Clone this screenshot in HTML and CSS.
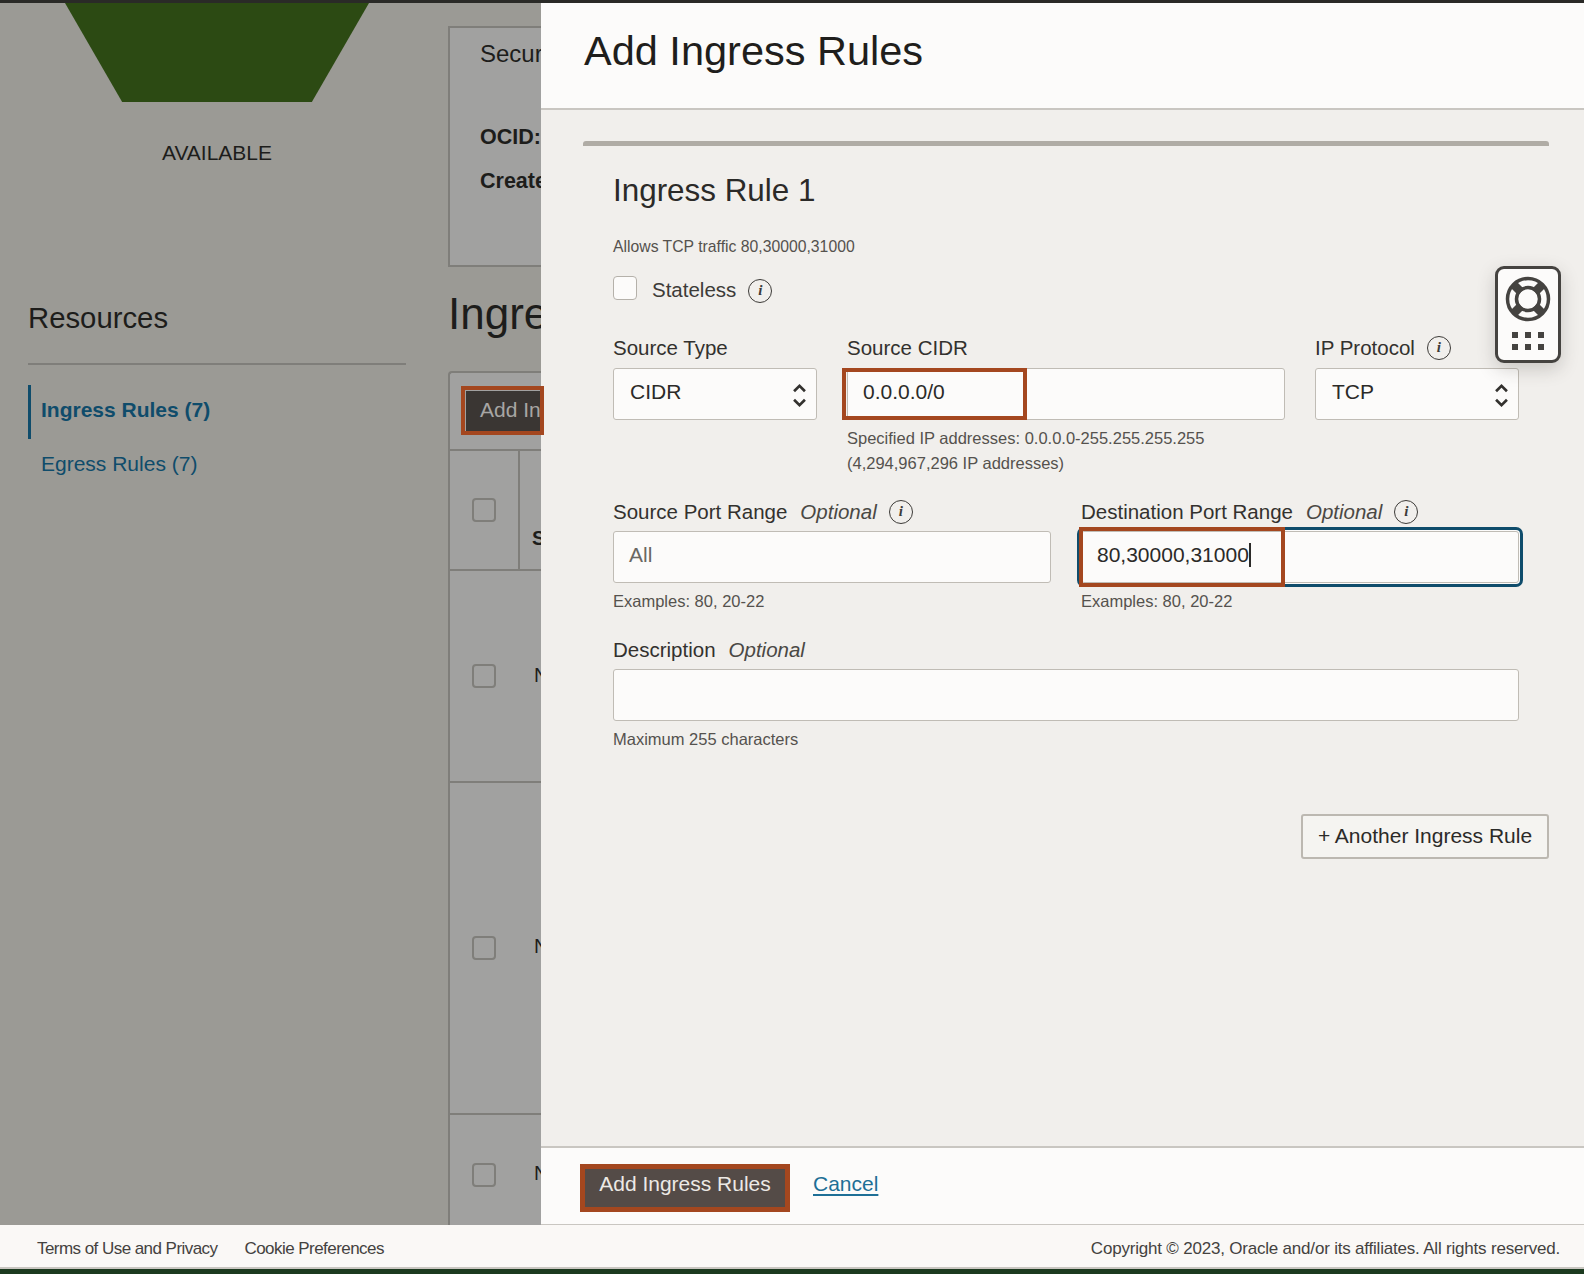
FILE: index.html
```html
<!DOCTYPE HTML>
<html>
<head>
<meta charset="utf-8" />
<title>Add Ingress Rules</title>
<link rel="stylesheet" href="styles.css">
</head>
<body>
<div class="topbar"></div>
<div class="main">
	<div class="back">
		<div class="side">
			<div class="shape"></div>
			<div class="state">AVAILABLE</div>
			<h2 class="res_title">Resources</h2>
			<ul class="res_nav">
				<li class="on"><a>Ingress Rules (7)</a></li>
				<li><a>Egress Rules (7)</a></li>
			</ul>
		</div>
		<div class="content">
			<div class="info_card">
				<div class="info_name">Security</div>
				<div class="info_line">OCID:</div>
				<div class="info_line">Created:</div>
			</div>
			<h2 class="list_title">Ingress</h2>
			<div class="table">
				<div class="toolbar"><span class="dark_btn">Add Ingress</span></div>
				<div class="t_head"><div class="t_check"><i class="box"></i></div><div class="t_cell"><b>St</b></div></div>
				<div class="t_row r1"><div class="t_check"><i class="box"></i></div><div class="t_name">No</div></div>
				<div class="t_row r2"><div class="t_check"><i class="box"></i></div><div class="t_name">No</div></div>
				<div class="t_row r3"><div class="t_check"><i class="box"></i></div><div class="t_name">No</div></div>
			</div>
		</div>
	</div>

	<div class="panel">
		<div class="p_head"><h1>Add Ingress Rules</h1></div>
		<div class="p_body">
			<div class="rule_bar"></div>
			<div class="rule">
				<h3>Ingress Rule 1</h3>
				<p class="hint allows">Allows TCP traffic 80,30000,31000</p>
				<div class="stateless"><i class="check"></i><span>Stateless</span><i class="tip">i</i></div>

				<div class="row r_source">
					<div class="field f_type">
						<label>Source Type</label>
						<div class="input select">CIDR<svg class="updown" viewBox="0 0 14 24"><path d="M2.5 8.5 7 4l4.500 4.500M2.500 15.500 7 20l4.500-4.500"/></svg></div>
					</div>
					<div class="field f_cidr">
						<label>Source CIDR</label>
						<div class="input">0.0.0.0/0<span class="mark m_cidr"></span></div>
						<p class="hint">Specified IP addresses: 0.0.0.0-255.255.255.255<br>(4,294,967,296 IP addresses)</p>
					</div>
					<div class="field f_proto">
						<label>IP Protocol<i class="tip">i</i></label>
						<div class="input select">TCP<svg class="updown" viewBox="0 0 14 24"><path d="M2.5 8.5 7 4l4.500 4.500M2.500 15.500 7 20l4.500-4.500"/></svg></div>
					</div>
				</div>

				<div class="row r_ports">
					<div class="field half">
						<label>Source Port Range<em>Optional</em><i class="tip">i</i></label>
						<div class="input empty">All</div>
						<p class="hint">Examples: 80, 20-22</p>
					</div>
					<div class="field half">
						<label>Destination Port Range<em>Optional</em><i class="tip">i</i></label>
						<div class="input focus">80,30000,31000<span class="caret"></span><span class="mark m_dest"></span></div>
						<p class="hint">Examples: 80, 20-22</p>
					</div>
				</div>

				<div class="field f_desc">
					<label>Description<em>Optional</em></label>
					<div class="input"></div>
					<p class="hint">Maximum 255 characters</p>
				</div>
			</div>
			<div class="more"><span class="more_btn">+ Another Ingress Rule</span></div>
		</div>
		<div class="p_foot">
			<span class="add_btn">Add Ingress Rules</span>
			<a class="cancel">Cancel</a>
		</div>
	</div>

	<span class="mark m_back"></span>

	<div class="helper">
		<svg class="buoy" viewBox="0 0 48 48">
			<circle cx="24" cy="24" r="20.500" fill="none" stroke="#454340" stroke-width="3.500"/>
			<circle cx="24" cy="24" r="11.500" fill="none" stroke="#454340" stroke-width="3.500"/>
			<path d="M10 10 17 17M38 10 31 17M10 38 17 31M38 38 31 31" stroke="#454340" stroke-width="8.500"/>
		</svg>
		<div class="dots"><i></i><i></i><i></i><i></i><i></i><i></i></div>
	</div>
</div>
<div class="footer">
	<div class="f_links"><a>Terms of Use and Privacy</a><a>Cookie Preferences</a></div>
	<div class="f_copy">Copyright © 2023, Oracle and/or its affiliates. All rights reserved.</div>
</div>
<div class="strip"></div>
</body>
</html>
```
FILE: styles.css
```css
*{ padding:0; margin:0; border:0; list-style-type:none; box-sizing:border-box;}
html,body{ height:1274px; overflow:hidden;}
body{ display:flex; flex-direction:column; font-family:"Liberation Sans",Arial,sans-serif; color:#2b2a28; background:#9b9a95;}
i,em{ display:inline-block;}

.topbar{ height:3px; background:#2a2a27; flex:none;}
.main{ height:1222px; flex:none; display:flex; position:relative;}

/* page behind the panel, dimmed */
.back{ width:541px; flex:none; display:flex; background:#9b9a95; overflow:hidden; color:#1d1d1b;}
.side{ width:448px; flex:none; padding-left:28px;}
.shape{ width:304px; height:99px; margin-left:37px; background:#2c4a13; clip-path:polygon(0 0,100% 0,81.200% 100%,18.800% 100%);}
.state{ width:378px; margin-top:37px; text-align:center; font-size:21px; line-height:28px;}
.res_title{ font-weight:normal; font-size:29.300px; line-height:38px; margin-top:132px; width:378px; height:66px; border-bottom:2px solid #7f7e7a;}
.res_nav{ margin-top:20px; width:378px;}
.res_nav li{ height:54px; padding-left:13px; line-height:50px; font-size:21px; color:#0f4c6b;}
.res_nav li.on{ border-left:3px solid #0f4c6b; padding-left:10px; font-weight:bold;}

.content{ width:93px; flex:none; background:#9b9a95; white-space:nowrap;}
.info_card{ width:300px; height:241px; margin-top:23px; border:2px solid #7f7e7a; background:#a1a1a0; padding:11px 0 0 30px;}
.info_name{ font-size:24px; line-height:30px; margin-bottom:46px;}
.info_line{ font-size:21.500px; line-height:44px; font-weight:bold;}
.list_title{ font-weight:normal; font-size:44px; line-height:52px; margin-top:21px; height:83px;}
.table{ width:300px; border-left:2px solid #7f7e7a; border-top:2px solid #7f7e7a; background:#a1a1a0; border-top-left-radius:4px;}
.toolbar{ height:78px; padding:18px 0 0 16px; border-bottom:2px solid #7f7e7a;}
.dark_btn{ display:block; width:200px; height:42px; background:#3a3633; color:#a7a6a4; font-size:21px; line-height:38px; padding-left:14px;}
.t_head,.t_row{ display:flex; border-bottom:2px solid #7f7e7a;}
.t_head{ height:120px;}
.r1{ height:212px;}
.r2{ height:332px;}
.r3{ height:200px; border-bottom:0;}
.t_check{ width:70px; flex:none; padding-top:47px; padding-left:22px;}
.t_head .t_check{ border-right:2px solid #7f7e7a;}
.box{ display:block; width:24px; height:24px; border:2px solid #7f7e7a; border-radius:4px;}
.t_cell{ padding:76px 0 0 12px; font-size:20px;}
.t_name{ font-size:20px; padding:93px 0 0 14px;}
.r1 .t_check{ padding-top:93px;}
.r2 .t_check{ padding-top:153px;}
.r2 .t_name{ padding-top:152px;}
.r3 .t_check{ padding-top:48px;}
.r3 .t_name{ padding-top:47px;}

/* side panel */
.panel{ flex:1; display:flex; flex-direction:column; background:#f1efec; min-width:0;}
.p_head{ height:107px; flex:none; background:#fcfbfa; border-bottom:2px solid #c9c6c1; padding:23px 0 0 43px;}
.p_head h1{ font-weight:normal; font-size:41.500px; line-height:50px; color:#1f1e1c;}
.p_body{ flex:1; padding:31px 35px 0 42px;}
.rule_bar{ height:5px; background:#b0aca5; border-radius:3px 3px 0 0;}
.rule{ padding:25px 30px 0 30px;}
.rule h3{ font-weight:normal; font-size:31.400px; line-height:40px; color:#2b2a28;}
.hint{ font-size:16.500px; line-height:25px; color:#55524e;}
.allows{ margin-top:23px; font-size:15.750px;}
.stateless{ display:flex; align-items:center; height:28px; margin-top:17px; font-size:20.500px; color:#3d3b38;}
.check{ width:24px; height:24px; margin-right:15px; margin-top:-4px; background:#fcfbfa; border:1px solid #b5b1aa; border-radius:4px;}
.tip{ width:24px; height:24px; flex:none; border:1.500px solid #3d3b38; border-radius:50%; margin-left:12px; text-align:center; font:italic bold 15px/21px "Liberation Serif",serif; color:#3d3b38;}
.stateless .tip{ margin-top:2px;}

.row{ display:flex;}
.r_source{ margin-top:30px; height:164px; gap:30px;}
.r_ports{ margin-top:0; gap:30px; height:138px;}
.field label{ display:flex; align-items:center; height:28px; margin-bottom:6px; font-size:20.500px; line-height:28px; color:#33312e;}
.half label,.f_desc label{ margin-bottom:5px;}
.field em{ margin-left:13px; color:#4a4844;}
.f_type,.f_proto{ width:204px; flex:none;}
.f_cidr{ flex:1;}
.f_cidr .hint{ margin-top:6px;}
.half{ flex:1;}
.half .hint{ margin-top:6px;}
.f_desc .hint{ margin-top:6px;}
.input{ position:relative; height:52px; padding-left:15px; background:#fcfbfa; border:1.500px solid #c0bcb5; border-radius:3px; font-size:21px; line-height:46px; color:#2b2a28;}
.select{ padding-left:16px;}
.empty{ color:#6a6763;}
.focus{ box-shadow:0 0 0 1px #fcfbfa,0 0 0 4px #0f4c6b; border-color:#c0bcb5;}
.caret{ display:inline-block; width:2px; height:24px; background:#2b2a28; vertical-align:-5px;}
.updown{ position:absolute; right:8px; top:12px; width:17px; height:29px; fill:none; stroke:#33312e; stroke-width:2.200;}

.mark{ position:absolute; border:4px solid #a4471f; display:block; pointer-events:none;}
.m_cidr{ left:-6px; top:-1px; width:185px; height:52px;}
.m_dest{ left:-3px; top:-5px; width:206px; height:60px;}
.m_back{ left:461px; top:383px; width:83px; height:49px;}

.more{ display:flex; justify-content:flex-end; margin-top:62px;}
.more_btn{ display:block; width:248px; height:45px; border:2px solid #bcb8b1; border-radius:3px; background:#f5f4f1; font-size:21px; line-height:39px; text-align:center; color:#2b2a28;}

.p_foot{ height:79px; flex:none; background:#fcfbfa; border-top:2px solid #c9c6c1; border-bottom:1px solid #c9c6c1; display:flex; align-items:center; padding-left:39px; gap:23px;}
.add_btn{ display:block; width:210px; height:48px; margin-top:3px; background:#544b47; border:5px solid #a4471f; color:#ece9e5; font-size:21px; line-height:30px; text-align:center;}
.cancel{ color:#1e6f96; font-size:21px; text-decoration:underline; text-underline-offset:3px; margin-top:-5px;}

.helper{ position:absolute; left:1495px; top:263px; width:66px; height:97px; background:#fcfbfa; border:3px solid #454340; border-radius:9px; box-shadow:0 6px 18px rgba(60,55,50,.22); display:flex; flex-direction:column; align-items:center;}
.buoy{ width:48px; height:48px; margin-top:6px;}
.dots{ display:grid; grid-template-columns:repeat(3,6px); gap:6px 7px; margin-top:9px;}
.dots i{ width:6px; height:6px; background:#454340;}

.footer{ height:44px; flex:none; background:#faf8f6; border-bottom:2px solid #c9c6c1; display:flex; justify-content:space-between; align-items:center; padding:5px 24px 0 37px; font-size:17px; color:#44423f;}
.f_links a{ margin-right:27px;}
.f_links{ letter-spacing:-.55px;}
.f_copy{ letter-spacing:-.2px;}
.strip{ height:5px; flex:none; background:#1c3a1f;}
```
